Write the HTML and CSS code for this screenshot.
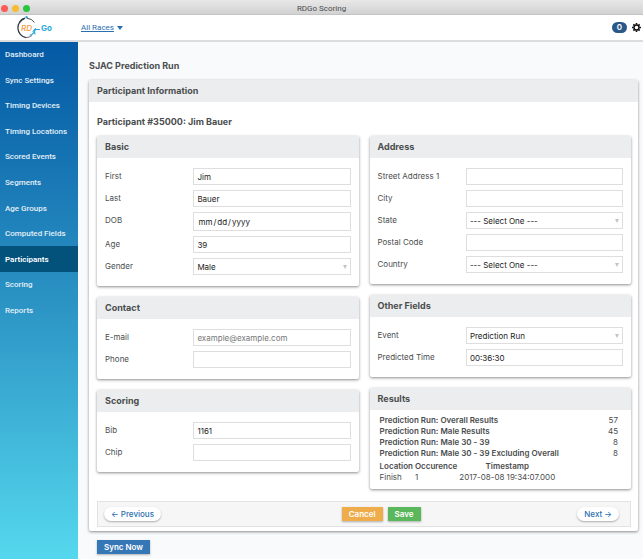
FILE: index.html
```html
<!DOCTYPE html>
<html lang="en">
<head>
    <meta charset="UTF-8">
    <title>RDGo Scoring</title>
    <link rel="stylesheet" href="styles.css">
</head>
<body>
    <div class="titlebar">
        <div class="lights">
            <span class="light red"></span>
            <span class="light yellow"></span>
            <span class="light green"></span>
        </div>
        RDGo Scoring
    </div>

    <header class="topbar">
        <svg class="logo" viewBox="0 0 40 24" role="img" aria-label="RD Go">
            <path d="M9 2.200A10 10 0 0 0 10 21.600" fill="none" stroke="#333b40" stroke-width="1.300"/>
            <path d="M8 2.700A10 10 0 0 0 4 6" fill="none" stroke="#333b40" stroke-width="1.800" stroke-dasharray="1.500 .7"/>
            <path d="M10 21.600A10 10 0 0 0 16 19.500" fill="none" stroke="#555d62" stroke-width=".9"/>
            <path d="M11 2.200A10 10 0 0 1 18.500 6.500" fill="none" stroke="#333b40" stroke-width=".9"/>
            <circle cx="10.500" cy="1.200" r="1.200" fill="#27a8dc"/>
            <path d="M23.500 13.500h-5l-1.500 2M19.500 12.500l-1 3.500-2.500 2.500-2 .5M18.500 16l.5 2" fill="none" stroke="#27a8dc" stroke-width="1.100" stroke-linecap="round"/>
            <text class="logo-rd" x="5" y="15">RD</text>
            <text class="logo-go" x="25" y="15">Go</text>
        </svg>
        <a href="#" class="races">All Races</a><span class="caret"></span>
        <span class="badge">0</span>
        <button class="gear" aria-label="Settings">
            <svg viewBox="0 0 20 20">
                <circle cx="10" cy="10" r="5.500" fill="none" stroke="#111" stroke-width="3"/>
                <path d="M10 0v4M10 16v4M0 10h4M16 10h4M3 3l2.800 2.800M14.200 14.200L17 17M3 17l2.800-2.800M14.200 5.800L17 3" stroke="#111" stroke-width="3.600"/>
            </svg>
        </button>
    </header>

    <div class="layout">
        <nav class="sidebar">
            <ul>
                <li><a href="#">Dashboard</a></li>
                <li><a href="#">Sync Settings</a></li>
                <li><a href="#">Timing Devices</a></li>
                <li><a href="#">Timing Locations</a></li>
                <li><a href="#">Scored Events</a></li>
                <li><a href="#">Segments</a></li>
                <li><a href="#">Age Groups</a></li>
                <li><a href="#">Computed Fields</a></li>
                <li><a href="#" class="active">Participants</a></li>
                <li><a href="#">Scoring</a></li>
                <li><a href="#">Reports</a></li>
            </ul>
        </nav>

        <main>
            <h1>SJAC Prediction Run</h1>

            <form class="panel">
                <h2>Participant Information</h2>
                <div class="panel-body">
                    <h3 class="participant">Participant #35000: Jim Bauer</h3>

                    <div class="columns">
                        <div class="column">
                            <section class="card">
                                <h3>Basic</h3>
                                <div class="fields">
                                    <label for="first">First</label>
                                    <input type="text" id="first" value="Jim">
                                    <label for="last">Last</label>
                                    <input type="text" id="last" value="Bauer">
                                    <label for="dob">DOB</label>
                                    <input type="date" id="dob">
                                    <label for="age">Age</label>
                                    <input type="text" id="age" value="39">
                                    <label for="gender">Gender</label>
                                    <div class="select">
                                        <select id="gender"><option>Male</option><option>Female</option></select>
                                    </div>
                                </div>
                            </section>

                            <section class="card">
                                <h3>Contact</h3>
                                <div class="fields">
                                    <label for="email">E-mail</label>
                                    <input type="email" id="email" placeholder="example@example.com">
                                    <label for="phone">Phone</label>
                                    <input type="tel" id="phone">
                                </div>
                            </section>

                            <section class="card">
                                <h3>Scoring</h3>
                                <div class="fields">
                                    <label for="bib">Bib</label>
                                    <input type="text" id="bib" value="1161">
                                    <label for="chip">Chip</label>
                                    <input type="text" id="chip">
                                </div>
                            </section>
                        </div>

                        <div class="column">
                            <section class="card">
                                <h3>Address</h3>
                                <div class="fields">
                                    <label for="street">Street Address 1</label>
                                    <input type="text" id="street">
                                    <label for="city">City</label>
                                    <input type="text" id="city">
                                    <label for="state">State</label>
                                    <div class="select">
                                        <select id="state"><option>--- Select One ---</option></select>
                                    </div>
                                    <label for="postal">Postal Code</label>
                                    <input type="text" id="postal">
                                    <label for="country">Country</label>
                                    <div class="select">
                                        <select id="country"><option>--- Select One ---</option></select>
                                    </div>
                                </div>
                            </section>

                            <section class="card">
                                <h3>Other Fields</h3>
                                <div class="fields">
                                    <label for="event">Event</label>
                                    <div class="select">
                                        <select id="event"><option>Prediction Run</option></select>
                                    </div>
                                    <label for="predicted">Predicted Time</label>
                                    <input type="text" id="predicted" value="00:36:30">
                                </div>
                            </section>

                            <section class="card">
                                <h3>Results</h3>
                                <div class="results">
                                    <table class="places">
                                        <tr><th>Prediction Run: Overall Results</th><td>57</td></tr>
                                        <tr><th>Prediction Run: Male Results</th><td>45</td></tr>
                                        <tr><th>Prediction Run: Male 30 - 39</th><td>8</td></tr>
                                        <tr><th>Prediction Run: Male 30 - 39 Excluding Overall</th><td>8</td></tr>
                                    </table>
                                    <table class="times">
                                        <tr><th>Location</th><th>Occurence</th><th class="stamp">Timestamp</th></tr>
                                        <tr><td>Finish</td><td>1</td><td>2017-08-08 19:34:07.000</td></tr>
                                    </table>
                                </div>
                            </section>
                        </div>
                    </div>

                    <div class="actions">
                        <button type="button" class="pill">← Previous</button>
                        <div class="center">
                            <button type="button" class="btn cancel">Cancel</button>
                            <button type="button" class="btn save">Save</button>
                        </div>
                        <button type="button" class="pill">Next →</button>
                    </div>
                </div>
            </form>

            <button class="btn sync">Sync Now</button>
        </main>
    </div>
</body>
</html>
```

FILE: styles.css
```css
* {
    box-sizing: border-box;
}
body {
    margin: 0;
    min-height: 100vh;
    display: flex;
    flex-direction: column;
    font-family: Inter, "Liberation Sans", sans-serif;
    font-size: 8px;
    color: #4a4d4e;
    background: #f9fafc;
}
h1, h2, h3, ul {
    margin: 0;
    padding: 0;
}
h1, h2, h3 {
    font-size: 9px;
    font-weight: 700;
}
button, input, select {
    font-family: inherit;
    font-size: 8px;
}
button {
    border: 0;
    cursor: pointer;
}
.titlebar, .races, .sidebar {
    font-family: Roboto, "Liberation Sans", sans-serif;
}

/* window chrome */
.titlebar {
    display: flex;
    align-items: center;
    justify-content: center;
    position: relative;
    height: 15px;
    padding-top: 2px;
    background: linear-gradient(#e8e8e8, #d2d2d2);
    border-bottom: 1px solid #c4c4c4;
}
.lights {
    position: absolute;
    left: 1px;
    top: 5px;
    display: flex;
    gap: 4px;
}
.light {
    width: 7px;
    height: 7px;
    border-radius: 50%;
}
.red { background: #fc5b57; }
.yellow { background: #f5bc2f; }
.green { background: #29c540; }

.topbar {
    display: flex;
    align-items: center;
    height: 27px;
    padding: 0 2px 0 16px;
    background: #fff;
    border-bottom: 2px solid #dcdcdc;
}
.logo {
    width: 40px;
    height: 24px;
}
.logo-rd, .logo-go {
    font-size: 8px;
}
.logo-rd {
    fill: #f09a36;
    font-style: italic;
    font-weight: 500;
}
.logo-go {
    fill: #27a8dc;
    font-weight: 700;
}
.races {
    margin-left: 25px;
    color: #2a6fb0;
}
.caret {
    margin-left: 3px;
    border: 3px solid transparent;
    border-top: 4px solid #2a6fb0;
    border-bottom: 0;
}
.badge {
    margin-left: auto;
    padding: 0 5px;
    line-height: 11px;
    border-radius: 6px;
    background: #2a5888;
    color: #fff;
    font-weight: 600;
}
.gear {
    width: 9px;
    height: 9px;
    margin-left: 5px;
    padding: 0;
    background: none;
}
.gear svg {
    display: block;
}

.layout {
    flex: 1;
    display: flex;
}
.sidebar {
    flex: 0 0 78px;
    background: linear-gradient(#0459a4, #2b93c4 50%, #55d8ee);
}
.sidebar ul {
    display: grid;
    grid-auto-rows: 1fr;
    height: 281px;
    list-style: none;
}
.sidebar a {
    display: flex;
    align-items: center;
    height: 100%;
    padding-left: 5px;
    color: #e3eff7;
    font-weight: 500;
    text-decoration: none;
    white-space: nowrap;
}
.sidebar .active {
    background: #02527c;
    color: #fff;
    font-weight: 600;
}

main {
    flex: 1;
    padding: 18px 5px 5px 11px;
}
h1 {
    line-height: 12px;
    margin-bottom: 8px;
}

.panel, .card {
    background: #fff;
    border-radius: 2px;
    box-shadow: 0 1px 3px rgba(0, 0, 0, .45);
}
.panel h2, .card h3 {
    padding: 0 8px;
    line-height: 22px;
    background: #ecedef;
    border-radius: 2px 2px 0 0;
}
.panel-body {
    padding: 14px 7px 4px 8px;
}
.participant {
    line-height: 12px;
    margin-bottom: 8px;
}
.columns {
    display: grid;
    grid-template-columns: 1fr 1fr;
    gap: 11px;
}
.column {
    display: flex;
    flex-direction: column;
    gap: 11px;
}
.fields {
    display: grid;
    grid-template-columns: 36fr 64fr;
    row-gap: 5px;
    padding: 10px 8px 11px;
}
.fields label {
    line-height: 16px;
}
.fields input, .fields select {
    display: block;
    width: 100%;
    height: 17px;
    padding: 0 3px;
    border: 1px solid #dedede;
    border-radius: 0;
    background: #fff;
    color: #222;
    appearance: none;
}
.fields input::placeholder {
    color: #777;
}
.fields input[type="date"] {
    height: 19px;
}
.fields input::-webkit-calendar-picker-indicator {
    display: none;
}
.select {
    position: relative;
}
.select::after {
    content: "";
    position: absolute;
    right: 4px;
    top: 7px;
    border: 2px solid transparent;
    border-top: 4px solid #c4c4c4;
    border-bottom: 0;
    pointer-events: none;
}

.results {
    padding: 5px 13px 6px 10px;
}
.results table {
    border-collapse: collapse;
}
.results th, .results td {
    padding: 0;
    line-height: 11px;
    text-align: left;
}
.results th {
    font-weight: 600;
}
.results .places {
    width: 100%;
    margin-bottom: 2px;
}
.results .places td {
    text-align: right;
}
.results .times th, .results .times td {
    padding-right: 2px;
}
.results .times .stamp {
    text-align: center;
}

.actions {
    display: flex;
    align-items: center;
    justify-content: space-between;
    margin-top: 12px;
    padding: 5px 11px 5px 6px;
    background: #f6f6f6;
    border: 1px solid #e2e2e2;
}
.center {
    display: flex;
    gap: 5px;
    margin-left: 24px;
}
.btn, .pill {
    height: 14px;
    padding: 0 7px;
    font-weight: 500;
    box-shadow: 0 1px 2px rgba(0, 0, 0, .3);
}
.btn {
    color: #fff;
    font-weight: 600;
}
.pill {
    border-radius: 7px;
    background: #fff;
    color: #2a6fb0;
}
.cancel { background: #eeac4b; }
.save { background: #5ab75b; }
.sync {
    display: block;
    margin: 9px 0 0 8px;
    background: #3577b6;
}
```
